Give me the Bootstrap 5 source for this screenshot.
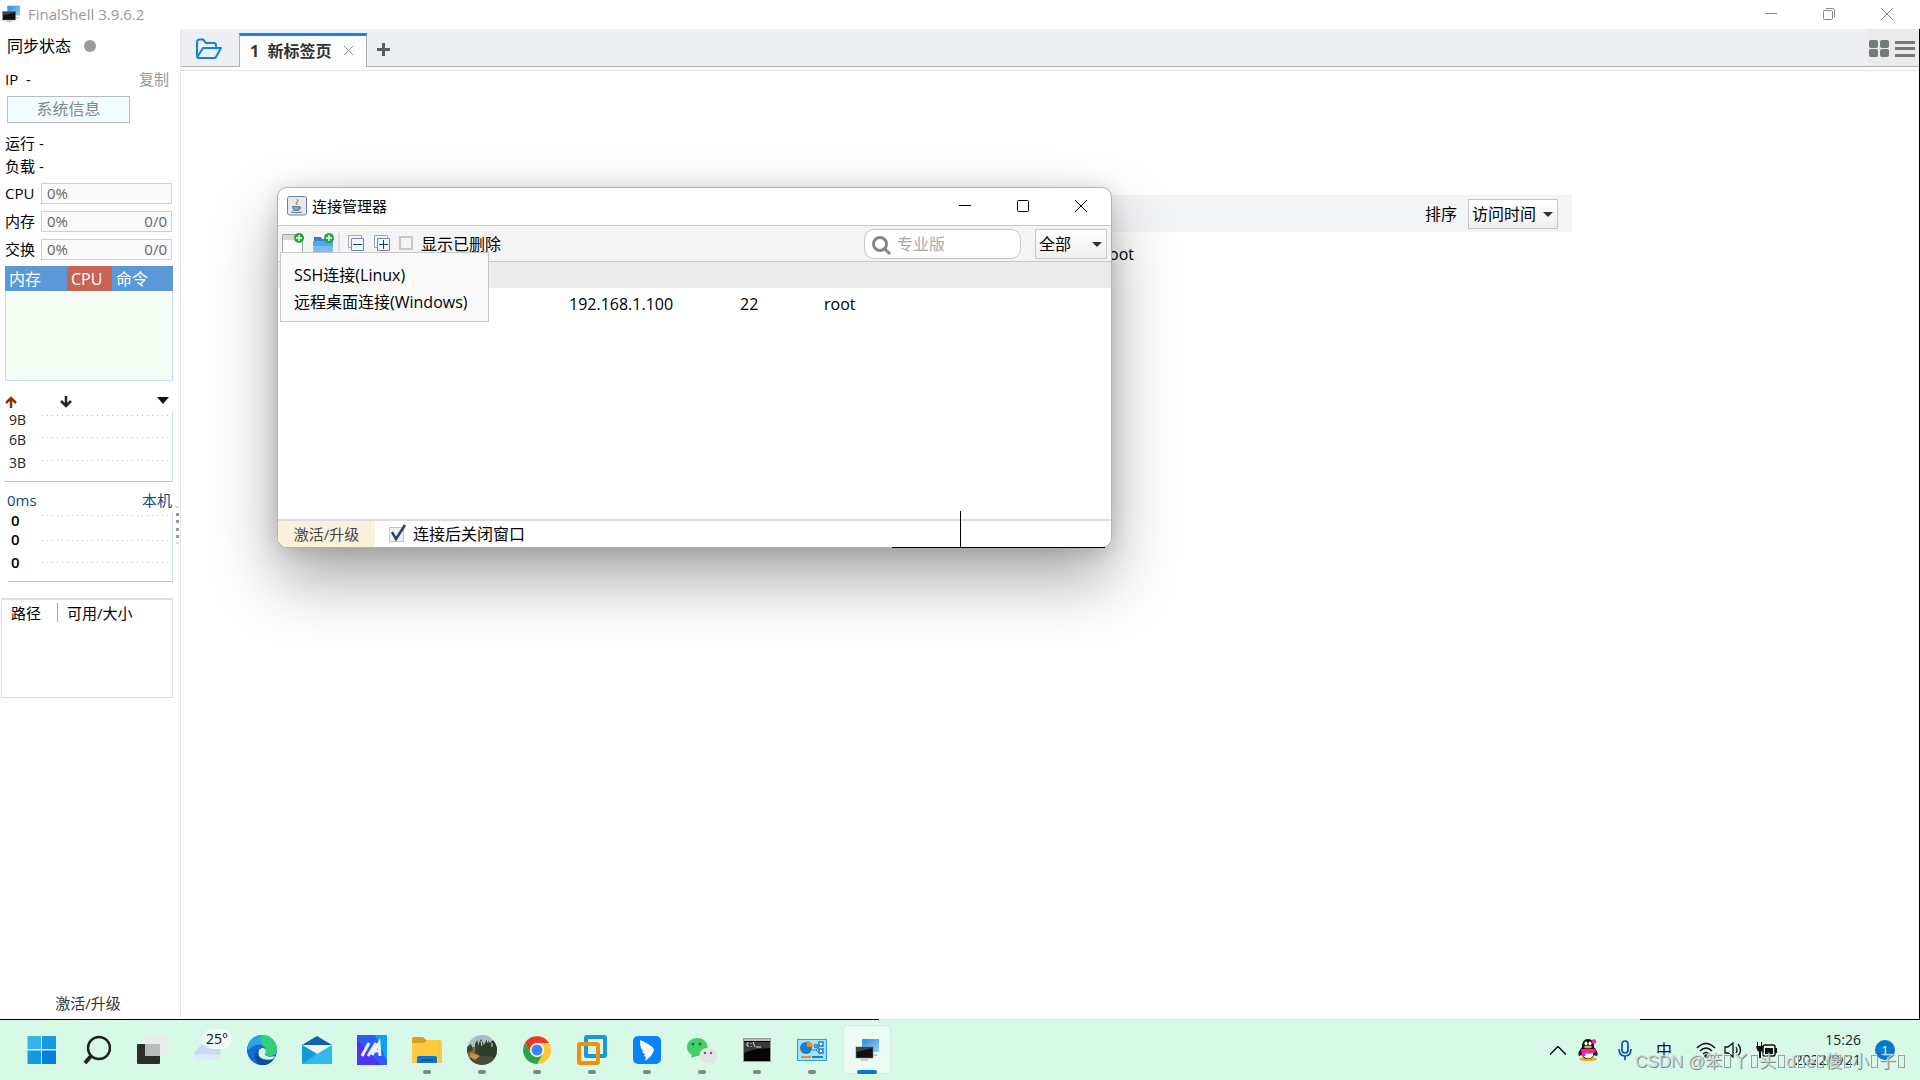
<!DOCTYPE html>
<html lang="zh-CN">
<head>
<meta charset="utf-8">
<meta name="viewport" content="width=device-width, initial-scale=1">
<title>FinalShell 3.9.6.2</title>
<link href="https://cdn.jsdelivr.net/npm/bootstrap@5.3.0/dist/css/bootstrap.min.css" rel="stylesheet">
<style>
body{font-family:"Open Sans","Noto Sans CJK SC",sans-serif;font-size:15px;line-height:20px;color:#000;background:#fff;overflow:hidden}
button,input,select{font-family:inherit;color:inherit}
.bare{border:0;background:none;padding:0;display:flex;align-items:center;justify-content:center}
.fs16{font-size:16px}
.titlebar{height:29px;color:#999;padding:0 0 2px 2px}
.titlebar .bare{width:58px;height:29px}
.side{width:181px;border-right:1px solid #e5e5e5;position:relative}
.sync{height:34px;padding:0 7px;gap:13px}
.sync i{width:12px;height:12px;border-radius:50%;background:#999}
.iprow{height:34px;padding:0 11px 2px 5px}
.iprow .bare{color:#999}
.sysinfo{width:123px;height:27px;margin:-1px 0 0 7px;border:1px solid #bbb;background:#f0fcff;color:#888;font-size:16px;line-height:20px;padding:0 0 2px}
.stat{height:23px;padding-left:5px}
.stats{padding:8px 0 2px}
.meter{height:28px;padding:0 8px 0 5px}
.meter label{width:36px}
.meter output{height:21px;border:1px solid #d0d0d0;background:#fafafa;color:#666;padding:0 4px 0 5px;line-height:19px}
.proc{margin:3px 7px 0 5px;border:1px solid #c8dcec;border-top:0;height:115px;background:#f4fcf4}
.proc .hd{margin:0 -1px;height:25px;background:#5b98d6;color:#fff;font-size:16px}
.proc .bare{justify-content:flex-start;padding:0 0 0 4px}
.proc .c1{width:62px}.proc .c2{width:45px;background:#c86451}
.net{height:18px;margin:12px 11px 0 5px}
.net .down{margin-left:43px}
.plot{margin-right:7px;border-right:1px solid #d0e0ec;border-bottom:1px solid #b4cedb}
.plot svg{display:block;width:100%;overflow:visible}
.plot text{font-size:14px;fill:#222}
.plot .wt{font-weight:600;font-size:15px;fill:#000}
.ping{height:25px;padding:0 8px 2px 7px;margin-top:6px;color:#0a4a8a}
.disk{margin:16px 7px 0 1px;height:100px;border:1px solid #ddd;border-top-width:2px;padding-top:3px}
.disk .k{width:56px;height:19px;border-right:1px solid #aaa;padding-left:9px;margin-right:9px}
.grip{position:absolute;left:176px;top:477px;width:3px}
.upg{font-size:15px;color:#333;height:32px;padding-right:4px}
.strip{height:38px;background:#edeff3;border-bottom:1px solid #b0b0b0}
.strip .fold{width:58px;height:37px;padding:3px 3px 0 0}
.tabx{height:34px;margin-top:4px;width:128px;border:solid #b0b0b0;border-width:0 1px;border-top:3px solid #0a84ff;background:#fdfdfd;padding:0 13px 2px 10px;color:#333}
.tabx b{font-size:16px;font-weight:700}
.plus{width:32px;height:37px;padding-top:4px}
.tools{width:51px;background:#ebebeb;gap:6px;padding:2px 0 0 1px}
.pane{margin-top:3px;border-top:1px solid #e5e5e5}
.mainarea{border-right:1px solid #000;position:relative}
.recent{max-width:1044px;width:61%;margin:124px auto 0}
.sortbar{height:37px;background:#f3f4f6;padding-right:14px;gap:11px}
.sel{appearance:none;border:1px solid #c4c6c8;border-radius:0;background:linear-gradient(#fff,#efefef);font-size:16px;height:30px;padding:0 20px 0 3px;outline:0}
.selbox{position:relative}
.selbox::after{content:"";position:absolute;right:5px;top:13px;border:5px solid transparent;border-top-color:#333;border-bottom:0;pointer-events:none}
.hostrow{height:44px;padding-right:438px}
.dlg{position:absolute;left:96px;top:158px;width:835px;height:361px;background:#fff;border:1px solid #b2b2b2;border-radius:10px;box-shadow:0 32px 64px rgba(0,0,0,.34),0 2px 20px rgba(0,0,0,.14)}
.dlgtitle{height:37px;padding:0 1px 2px 9px}
.dlgtitle span{margin-left:5px}
.dlgtitle .bare{width:58px;height:36px}
.bar{height:37px;background:#f4f4f4;border:solid #c6c6c6;border-width:1px 0;padding:0 4px}
.bar .bare{height:24px}
.fold2{margin-left:10px}
.find{position:relative;width:157px;margin-right:14px}
.find input{width:157px;height:30px;border:1px solid #c6c6c6;border-radius:10px;padding:0 8px 0 32px;font-size:16px;outline:0}
.find input::placeholder{color:#a8a8a8;opacity:1}
.find svg{position:absolute;left:8px;top:7px}
.scope{width:72px}
.box{appearance:none;width:14px;height:14px;border:2px solid #c8c8c8;background:#f4f4f4;margin:0 8px 2px 9px}
.boxk{appearance:none;width:18px;height:19px;margin:0 6px 2px 14px}
.tickw{position:relative;display:flex;align-items:center}
.tickw svg{position:absolute;left:14px;top:0;pointer-events:none}
.hosts{width:100%;font-size:16px;table-layout:fixed}
.hosts th{height:26px;background:#ebebeb;padding:0}
.hosts td{height:32px;padding:0}
.hosts .h1{width:291px}.hosts .h2{width:171px}.hosts .h3{width:84px}
.foot{height:28px;border-top:2px solid #dcdcdc;font-size:16px}
.foot .up{width:97px;height:26px;background:#faf1dd;color:#444;font-size:15px;border-bottom-left-radius:9px}
.caretline{position:absolute;left:682px;top:323px;width:1px;height:37px;background:#000}
.baseline2{position:absolute;left:614px;right:6px;bottom:-1px;height:1px;background:#000}
.pop{position:absolute;left:2px;top:64px;width:209px;height:70px;background:#fafafa;border:1px solid #c8c8c8;padding:8px 0 0 13px;font-size:16px}
.pop .bare{height:27px;justify-content:flex-start}
.task{height:61px;background:#d8f8e8;border-top:1px solid #000;padding-left:14px;position:relative}
.task::before{content:"";position:absolute;top:-1px;left:879px;right:280px;height:1px;background:#e4e4e4}
.app{width:55px;height:60px;position:relative}
.app.run::after{content:"";position:absolute;bottom:6px;left:24px;width:8px;height:4px;border-radius:2px;background:#808784}
.app.act::after{width:20px;left:18px;background:#0078d4}
.app.act::before{content:"";position:absolute;left:4px;top:5px;width:48px;height:49px;border-radius:5px;background:#eafcf3;border:1px solid #d2eee0}
.app svg{position:relative}
.wthr{position:absolute;left:23px;top:9px;width:30px;height:20px;border-radius:10px;background:#f0fbf5;font-size:14px;line-height:20px;color:#111}
.tray{position:relative;color:#111;padding-right:25px}
.tray .bare{height:60px}
.clock{font-size:14px;line-height:20px;width:67px;text-align:right;color:#222;margin-right:14px;white-space:nowrap}
.tray .num{width:20px;height:20px;border-radius:50%;background:#0078d4;color:#fff;font-size:13px}
.wm{position:absolute;right:14px;bottom:6px;font-family:"Liberation Sans","Noto Sans CJK SC",sans-serif;font-size:17px;line-height:24px;white-space:nowrap;color:rgba(205,220,212,.85);text-shadow:1px 1px 0 #888;pointer-events:none}
.wm u{text-decoration:none;display:inline-block;width:7px;height:13px;border:1px solid #98a29d;margin:0 1px 0 2px;vertical-align:-1px;box-shadow:-1px -1px 0 #e8f6ef}
</style>
</head>
<body class="d-flex flex-column vh-100">
<svg width="0" height="0" class="position-absolute" aria-hidden="true">
<defs>
<linearGradient id="scr" x1="0" y1="0" x2="1" y2="1"><stop offset="0" stop-color="#2f8de0"/><stop offset="1" stop-color="#8fd0fb"/></linearGradient>
<symbol id="shell" viewBox="0 0 24 24"><rect x="7" y="1" width="17" height="13" fill="url(#scr)"/><path d="M18 16h4l1 2h-6z" fill="#ccc"/><rect x="1" y="9" width="17" height="11" fill="#111" stroke="#777" stroke-width=".6"/><path d="M1 14l17-4v-1H1z" fill="#444"/><path d="M7 20h5l2 3H5z" fill="#ccc"/></symbol>
</defs>
</svg>

<header class="titlebar d-flex align-items-center flex-shrink-0">
<svg width="18" height="18"><use href="#shell"/></svg><span class="ms-2">FinalShell 3.9.6.2</span>
<div class="d-flex ms-auto me-1">
<button class="bare" aria-label="最小化"><svg width="12" height="12" stroke="#888"><path d="M0 5.500h12"/></svg></button>
<button class="bare" aria-label="还原"><svg width="12" height="12" fill="none" stroke="#888"><rect x=".5" y="2.500" width="9" height="9" rx="1"/><path d="M3 .5h6.500q2 0 2 2V9"/></svg></button>
<button class="bare" aria-label="关闭"><svg width="12" height="12" stroke="#888"><path d="M0 0l12 12M12 0L0 12"/></svg></button>
</div>
</header>

<div class="d-flex flex-fill">
<aside class="side d-flex flex-column flex-shrink-0">
<div class="sync d-flex align-items-center fs16"><span>同步状态</span><i></i></div>
<div class="iprow d-flex align-items-center justify-content-between"><span>IP&nbsp; -</span><button class="bare">复制</button></div>
<button class="sysinfo">系统信息</button>
<div class="stats">
<div class="stat d-flex align-items-center">运行 -</div>
<div class="stat d-flex align-items-center">负载 -</div>
</div>
<div class="meter d-flex align-items-center"><label for="m1">CPU</label><output id="m1" class="flex-fill">0%</output></div>
<div class="meter d-flex align-items-center"><label for="m2">内存</label><output id="m2" class="flex-fill d-flex justify-content-between"><span>0%</span><span>0/0</span></output></div>
<div class="meter d-flex align-items-center"><label for="m3">交换</label><output id="m3" class="flex-fill d-flex justify-content-between"><span>0%</span><span>0/0</span></output></div>
<div class="proc"><div class="hd d-flex"><button class="bare c1">内存</button><button class="bare c2">CPU</button><button class="bare">命令</button></div></div>
<div class="net d-flex align-items-center">
<svg width="12" height="12" fill="none" stroke="#8a3208" stroke-width="2.500"><path d="M6 12V2M1 7l5-5 5 5"/></svg>
<svg class="down" width="12" height="12" fill="none" stroke="#1c2a20" stroke-width="2.500"><path d="M6 0v10M1 5l5 5 5-5"/></svg>
<svg class="ms-auto mb-1" width="12" height="7" fill="#111"><path d="M0 0h12L6 7z"/></svg>
</div>
<div class="plot ms-1"><svg height="70"><g stroke="#bbb" stroke-dasharray="1 4"><path d="M38 4.500h126M38 26.500h126M38 49.500h126"/></g><text x="5" y="14">9B</text><text x="5" y="34">6B</text><text x="5" y="57">3B</text></svg></div>
<div class="ping d-flex align-items-center justify-content-between"><span>0ms</span><span>本机</span></div>
<div class="plot ms-2"><svg height="68"><g stroke="#bbb" stroke-dasharray="1 4"><path d="M34 2.500h126M34 27.500h126M34 49.500h126"/></g><text class="wt" x="3" y="13">0</text><text class="wt" x="3" y="32">0</text><text class="wt" x="3" y="55">0</text></svg></div>
<div class="disk d-flex"><span class="k">路径</span><span>可用/大小</span></div>
<button class="bare upg mt-auto">激活/升级</button>
<svg class="grip" height="40" fill="#999"><path d="M0 7h3v3H0zM0 14h3v3H0zM0 22h3v3H0zM0 29h3v3H0z"/><path fill="#ddd" d="M0 0h3v2H0zM0 36h3v2H0z"/></svg>
</aside>

<main class="mainarea flex-fill">
<div class="strip d-flex">
<button class="bare fold" aria-label="打开"><svg width="28" height="22" viewBox="0 0 28 22" fill="none" stroke="#0f84dc" stroke-width="2" stroke-linejoin="round"><path d="M2 19V4q0-2.500 2.500-2.500H8l3 3.500h8q2 0 2 2v3M2 19.500L8 10h18l-5 9q-.5 1-2 1H3.500q-1 0-1.500-.8"/></svg></button>
<div class="tabx d-flex align-items-center justify-content-between"><b>1&nbsp; 新标签页</b><button class="bare" aria-label="关闭标签"><svg width="9" height="9" stroke="#999"><path d="M0 0l9 9M9 0L0 9"/></svg></button></div>
<button class="bare plus" aria-label="新标签"><svg width="13" height="13" fill="#5a5d62"><path d="M5 0h3v5h5v3H8v5H5V8H0V5h5z"/></svg></button>
<div class="tools d-flex align-items-center ms-auto">
<button class="bare" aria-label="网格"><svg width="20" height="17" fill="#747a79"><rect width="9" height="8" rx="2"/><rect x="11" width="9" height="8" rx="2"/><rect y="9" width="9" height="8" rx="2"/><rect x="11" y="9" width="9" height="8" rx="2"/></svg></button>
<button class="bare" aria-label="菜单"><svg width="20" height="16" fill="#747a79"><path d="M0 0h20v3H0zM0 6h20v3H0zM0 13h20v3H0z"/></svg></button>
</div>
</div>
<div class="pane overflow-hidden">
<section class="recent">
<div class="sortbar d-flex align-items-center justify-content-end fs16"><label for="sort">排序</label><span class="selbox d-flex"><select id="sort" class="sel"><option>访问时间</option></select></span></div>
<div class="hostrow d-flex align-items-center justify-content-end fs16">root</div>
</section>
</div>

<section class="dlg" role="dialog" aria-label="连接管理器">
<div class="dlgtitle d-flex align-items-center">
<svg width="20" height="20" viewBox="0 0 20 20"><rect x=".5" y=".5" width="19" height="18.500" rx="2" fill="#e4e9ef" stroke="#6c7fa8"/><path d="M10 9c-3-3 2-3 0-6 3 2-1 3 0 6z" fill="#e88b2e" stroke="#e88b2e"/><path d="M5.500 10.500h7l-1 4h-5zM12.500 11q3 0 0 2.500M4 16q6 1.500 11 0" fill="#8ba0bd" stroke="#5f7a9d"/></svg>
<span>连接管理器</span>
<div class="d-flex ms-auto">
<button class="bare" aria-label="最小化"><svg width="12" height="12" stroke="#000"><path d="M0 5.500h12"/></svg></button>
<button class="bare" aria-label="最大化"><svg width="12" height="12" fill="none" stroke="#000"><rect x=".5" y=".5" width="11" height="11" rx="1"/></svg></button>
<button class="bare" aria-label="关闭"><svg width="12" height="12" stroke="#000"><path d="M0 0l12 12M12 0L0 12"/></svg></button>
</div>
</div>
<div class="bar d-flex align-items-center">
<button class="bare" aria-label="新建"><svg width="22" height="24" viewBox="0 0 22 24"><path d="M.5 24V2.500h20V24" fill="#fff" stroke="#aaa"/><path d="M1 3h19v5H1z" fill="#d8d8d8"/><circle cx="17" cy="6" r="5" fill="#22a83a"/><path d="M17 3v6M14 6h6" stroke="#fff" stroke-width="1.500"/></svg></button>
<button class="bare ms-2" aria-label="新建文件夹"><svg width="22" height="24" viewBox="0 0 22 24"><path d="M2 5h7l1 2h9v8H2z" fill="#2f82d0"/><path d="M1 9h20v10q0 2-2 2H3q-2 0-2-2z" fill="#7bbcf4"/><path d="M1 9h20v5H1z" fill="#57a5e8"/><circle cx="17" cy="6" r="5" fill="#22a83a"/><path d="M17 3v6M14 6h6" stroke="#fff" stroke-width="1.500"/></svg></button>
<svg class="ms-1 me-2" width="2" height="22"><path d="M1 0v22" stroke="#ccc"/></svg>
<button class="bare" aria-label="折叠"><svg width="16" height="17" fill="#f0fbff"><path d="M.5.500h13v12H.5z" stroke="#9aa7c4"/><path d="M3.500 3.500h12v12h-12z" stroke="#7484ac"/><path d="M5 9.500h9" stroke="#0f3d80"/></svg></button>
<button class="bare fold2" aria-label="展开"><svg width="16" height="17" fill="#f0fbff"><path d="M.5.500h13v12H.5z" stroke="#9aa7c4"/><path d="M3.500 3.500h12v12h-12z" stroke="#7484ac"/><path d="M5 9.500h9M9.500 5v9" stroke="#0f3d80"/></svg></button>
<input class="box" type="checkbox" id="del"><label for="del" class="fs16">显示已删除</label>
<div class="find ms-auto"><input type="text" placeholder="专业版" aria-label="搜索"><svg width="19" height="19" fill="none" stroke="#7d8786" stroke-width="3"><circle cx="8" cy="8" r="6.500"/><path d="M13 13l5 5"/></svg></div>
<span class="selbox d-flex"><select class="sel scope" aria-label="范围"><option>全部</option></select></span>
</div>
<table class="hosts">
<colgroup><col class="h1"><col class="h2"><col class="h3"><col></colgroup>
<thead><tr><th></th><th></th><th></th><th></th></tr></thead>
<tbody><tr><td></td><td>192.168.1.100</td><td>22</td><td>root</td></tr></tbody>
</table>
<div class="foot d-flex align-items-center position-absolute bottom-0 start-0 end-0">
<button class="bare up">激活/升级</button>
<span class="tickw"><input class="boxk" type="checkbox" id="cls" checked><svg width="18" height="19" fill="none"><rect x=".5" y="3.500" width="14" height="14" fill="#f0f0f0" stroke="#c4c4c4"/><path d="M3 8l4 7L16 1" stroke="#2b3c74" stroke-width="2.500"/></svg></span><label for="cls">连接后关闭窗口</label>
</div>
<div class="caretline"></div><div class="baseline2"></div>
<div class="pop"><button class="bare">SSH连接(Linux)</button><button class="bare">远程桌面连接(Windows)</button></div>
</section>
</main>
</div>

<footer class="task d-flex flex-shrink-0">
<button class="bare app" aria-label="开始"><svg width="30" height="30" viewBox="0 0 30 30"><path d="M.5 1H14v13H.5z" fill="#35b5ec"/><path d="M15 1h14v13H15zM.5 15.500H14V29H.5z" fill="#149be4"/><path d="M15 15.500h14V29H15z" fill="#0580dc"/></svg></button>
<button class="bare app" aria-label="搜索"><svg width="28" height="30" viewBox="0 0 28 30" fill="none" stroke="#222" stroke-width="2.500"><circle cx="16" cy="13" r="11"/><path d="M8 21l-6 7" stroke-width="4"/></svg></button>
<button class="bare app" aria-label="任务视图"><svg width="30" height="30" viewBox="0 0 30 30"><rect y="9" width="23" height="20" rx="1" fill="#2c2e2c"/><rect x="8" y="1" width="22" height="20" rx="1" fill="#e8eae9" opacity=".92"/><path d="M8 9h15v12H8z" fill="#b9bbba"/></svg></button>
<button class="bare app" aria-label="天气"><svg width="30" height="30" viewBox="0 0 30 30"><circle cx="23" cy="14" r="6" fill="#fbd38a"/><path d="M6 25a6 6 0 0 1 0-11 8 8 0 0 1 14-1 6 6 0 0 1 3 12z" fill="#c9daf2"/><path d="M1 20q10-2 26 0-1 5-5 5H6q-4 0-5-5z" fill="#dfe9f8"/></svg><span class="wthr">25°</span></button>
<button class="bare app" aria-label="Edge"><svg width="30" height="30" viewBox="0 0 30 30"><circle cx="15" cy="15" r="15" fill="#0f6fce"/><path d="M1 10A15 15 0 0 1 30 15q0 6-7 6-5 0-4-3 2-7-5-8-7-1-13 5z" fill="#2aa6e0"/><path d="M14 0a15 15 0 0 1 16 15q0 5-7 6-5 0-4-3 1-5-3-7-4-6-2-11z" fill="#35cf7c"/><path d="M12 14q-4 7 4 11 6 2 11-1Q20 33 11 29q-7-8 1-15z" fill="#114a96"/><path d="M12 15q4-4 7 0 0 3-1 4 1 4 10 2l-2 3q-10 2-14-3-1-3 0-6z" fill="#d8f8e8"/></svg></button>
<button class="bare app" aria-label="邮件"><svg width="30" height="30" viewBox="0 0 30 30"><path d="M0 10L15 1l15 9z" fill="#0c62ae"/><path d="M3 10h24l-12 9z" fill="#f4f4f4"/><path d="M0 10l15 9 15-9v19H0z" fill="#33b8f0"/><path d="M0 10l15 9L0 29z" fill="#139be0"/></svg></button>
<button class="bare app" aria-label="应用"><svg width="30" height="30" viewBox="0 0 30 30"><path d="M0 0h30v30H0z" fill="#2f5bf5"/><path d="M18 0h12v26z" fill="#0aa1f7"/><path d="M0 5l24 25H0z" fill="#4a35f4"/><path d="M5 21L12 8M11 21l8-13M15 20L22 8l1 13M17 16h6" stroke="#e8f2ff" stroke-width="3" fill="none"/></svg></button>
<button class="bare app run" aria-label="文件资源管理器"><svg width="30" height="30" viewBox="0 0 30 30"><path d="M0 4q0-2 2-2h9l3 3h14v6H0z" fill="#dd9c22"/><path d="M0 8h12l3-3h13q2 0 2 2v21H0z" fill="#fdc93f"/><path d="M5 28v-5q0-2 2-2h16q2 0 2 2v5z" fill="#0b76cf"/><path d="M9 25h12" stroke="#064c8c" stroke-width="1.500"/></svg></button>
<button class="bare app run" aria-label="照片"><svg width="30" height="30" viewBox="0 0 30 30"><clipPath id="rd"><circle cx="15" cy="15" r="15"/></clipPath><g clip-path="url(#rd)"><path d="M0 0h30v30H0z" fill="#a9bcc8"/><path d="M0 12h30v18H0z" fill="#8b6a3b"/><path d="M12 24V8l2-4 3 6 3-6 3 4 3-3 4 5v16z" fill="#2d3c2c"/><path d="M8 18V9l2-4 2 6v9zM0 12l4-3 2 6-6 3z" fill="#37452f"/><path d="M14 6l1 5M20 4l1 4M25 8v4" stroke="#cfe0ea"/><path d="M0 24q14-6 30-1v8H0z" fill="#474b38"/><path d="M4 18l9 3-5 4-5-3z" fill="#c98f4e"/></g></svg></button>
<button class="bare app run" aria-label="Chrome"><svg width="28" height="28" viewBox="0 0 28 28"><circle cx="14" cy="14" r="14" fill="#fcc934"/><path d="M2 7a14 14 0 0 1 24 0H14a7 7 0 0 0-6 10.500z" fill="#e33b2e"/><path d="M2 7a14 14 0 0 0 12 21l6-10.500q-7 6-12 0z" fill="#2ba24c"/><circle cx="14" cy="14" r="7" fill="#fff"/><circle cx="14" cy="14" r="5.500" fill="#3f83f0"/></svg></button>
<button class="bare app run" aria-label="VMware"><svg width="30" height="30" viewBox="0 0 30 30" fill="none" stroke-width="4"><rect x="9" y="2" width="19" height="19" rx="1" stroke="#1b97da"/><rect x="2" y="9" width="19" height="19" rx="1" stroke="#f29108"/><path d="M9 12v8q0 1 1 1h8" stroke="#1b97da"/></svg></button>
<button class="bare app run" aria-label="钉钉"><svg width="28" height="28" viewBox="0 0 28 28"><rect width="28" height="28" rx="5" fill="#0b82fb"/><path d="M7 4q10 4 14 9 0 3-3 7l-6 5 1-4-2-1 1-2-3-2 1-1-2-3q-1-3-1-8z" fill="#fff"/></svg></button>
<button class="bare app run" aria-label="微信"><svg width="32" height="28" viewBox="0 0 32 28"><path d="M11 2c14 0 14 18 0 18l-6 2 1-3C-3 14 1 2 11 2z" fill="#45cf68"/><path d="M22 12c11 0 12 12 5 14l1 2-5-1c-12 0-13-15-1-15z" fill="#e2e4e3"/><g fill="#1d7a3a"><circle cx="7" cy="8" r="1.500"/><circle cx="14" cy="8" r="1.500"/></g><g fill="#666"><circle cx="19" cy="17" r="1.200"/><circle cx="25" cy="17" r="1.200"/></g></svg></button>
<button class="bare app run" aria-label="终端"><svg width="28" height="24" viewBox="0 0 28 24"><rect x=".5" y=".5" width="27" height="23" fill="#050505" stroke="#9a9a9a"/><path d="M1 4h26v6Q12 10 1 15z" fill="#3a3a3a"/><path d="M1 2h26" stroke="#bbb" stroke-width="2"/><path d="M6 5H4v3h2M8 5v1M8 8v1M10 4l2 5M13 9h5" stroke="#ddd" fill="none"/></svg></button>
<button class="bare app run" aria-label="控制面板"><svg width="30" height="22" viewBox="0 0 30 22"><rect x=".5" y=".5" width="29" height="21" fill="#a6e2fa" stroke="#2f9bd2"/><circle cx="9" cy="9" r="6" fill="#1c7dc4"/><path d="M10 8V2a6 6 0 0 1 6 6z" fill="#f28a1c"/><path d="M15 11h4l4-4M19 11l4 4" stroke="#1c7dc4" fill="none"/><g fill="#fff" stroke="#1c7dc4" stroke-width="1.500"><rect x="22" y="3" width="4" height="4"/><circle cx="19" cy="7" r="1.500"/><rect x="22" y="10" width="4" height="4"/></g><path d="M4 18h10" stroke="#f28a1c" stroke-width="2"/><path d="M15 18h11" stroke="#1c7dc4" stroke-width="2"/></svg></button>
<button class="bare app run act" aria-label="FinalShell"><svg width="24" height="24"><use href="#shell"/></svg></button>
<div class="tray d-flex align-items-center ms-auto">
<button class="bare" aria-label="展开托盘"><svg width="16" height="9" fill="none" stroke="#111" stroke-width="1.500"><path d="M0 8.500l8-8 8 8"/></svg></button>
<button class="bare ms-2 ps-1" aria-label="QQ"><svg width="20" height="22" viewBox="0 0 20 22"><ellipse cx="10" cy="20" rx="9" ry="2" fill="#f5a623"/><path d="M4 8q0-8 6-8t6 8q5 6 3 9l-3-1q-1 4-6 4t-6-4l-3 1q-2-3 3-9z" fill="#111"/><path d="M5 13h10v4q-4 5-10 0z" fill="#fff"/><path d="M3 10h14l1 3q-7 3-11 1v3H4z" fill="#ff1f9a"/><ellipse cx="8" cy="4.500" rx="1.500" ry="2" fill="#fff"/><ellipse cx="12" cy="4.500" rx="1.500" ry="2" fill="#fff"/><ellipse cx="10" cy="8" rx="4" ry="1.300" fill="#f5a623"/><circle cx="16" cy="2.500" r="2.300" fill="#ff1fa8"/></svg></button>
<button class="bare ms-3 ps-1" aria-label="麦克风"><svg width="14" height="20" viewBox="0 0 14 20" fill="none" stroke="#0f4fae" stroke-width="1.700"><rect x="4" y="1" width="6" height="12" rx="3"/><path d="M1 9q0 7 6 7t6-7M7 16v4"/></svg></button>
<button class="bare fs-6 ms-4" aria-label="输入法">中</button>
<button class="bare ms-4" aria-label="网络"><svg width="20" height="16" viewBox="0 0 20 16" fill="none" stroke="#111" stroke-width="1.500"><path d="M1 6q9-9 18 0M4 9q6-6 12 0M7 12q3-3 6 0"/><circle cx="10" cy="14" r="1" fill="#111"/></svg></button>
<button class="bare ms-2" aria-label="音量"><svg width="20" height="16" viewBox="0 0 20 16" fill="none" stroke="#111" stroke-width="1.300"><path d="M1 5h3l5-4v14l-5-4H1zM12 5q2 3 0 6M14 2q5 6 0 12"/></svg></button>
<button class="bare ms-2 me-3 ps-1" aria-label="电池"><svg width="22" height="16" viewBox="0 0 22 16"><rect x="7" y="3" width="12" height="11" rx="2" fill="none" stroke="#111" stroke-width="1.500"/><path d="M9 6h8v6H9zM19 6h2v5h-2zM0 4h7v4l-2 2H3L1 8zM1 0h1v4H1zM5 0h1v4H5zM3 9h2v7H3z" fill="#111"/></svg></button>
<div class="clock"><div>15:26</div><div>2022/9/21</div></div>
<button class="bare num" aria-label="通知">1</button>
</div>
<div class="wm">CSDN @笨<u></u>丫<u></u>头<u></u>d<u></u>e<u></u>傻<u></u>小<u></u>子<u></u></div>
</footer>
<script src="https://cdn.jsdelivr.net/npm/bootstrap@5.3.0/dist/js/bootstrap.bundle.min.js"></script>
</body>
</html>
